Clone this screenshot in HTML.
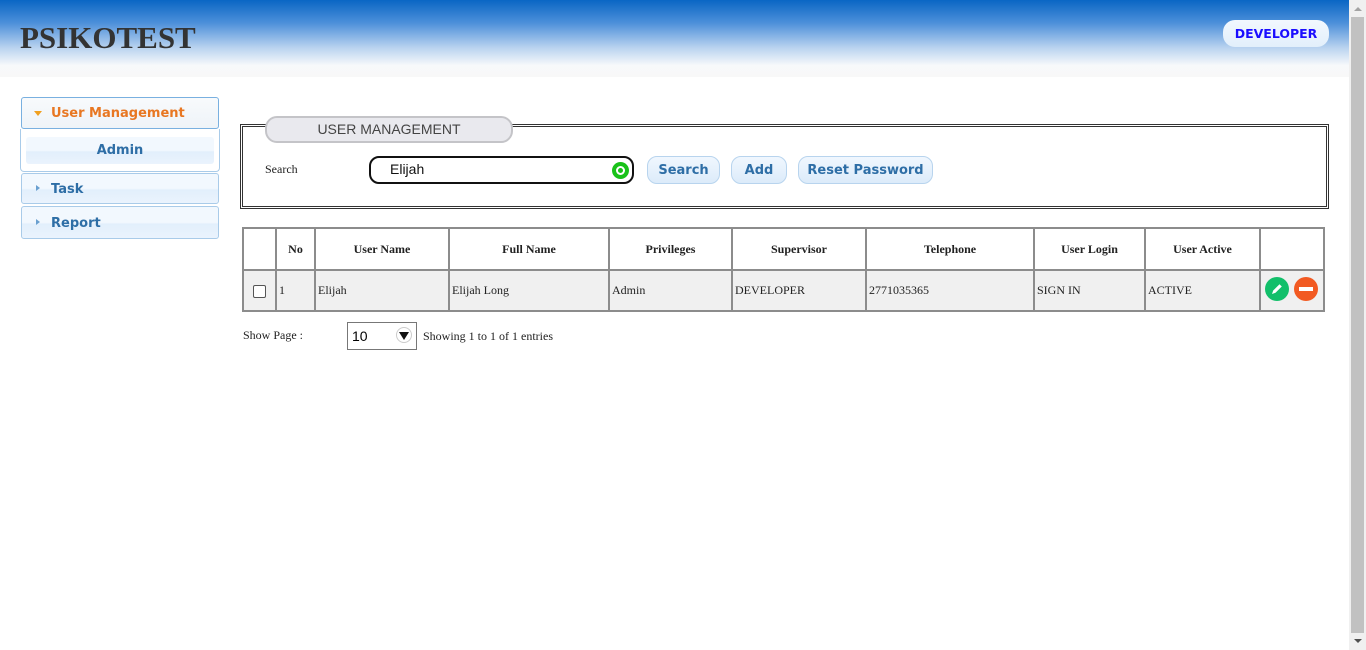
<!DOCTYPE html>
<html><head><style>
*{box-sizing:border-box;margin:0;padding:0}
body{width:1366px;height:650px;overflow:hidden;background:#fff;font-family:"Liberation Serif",serif;position:relative}
.a{position:absolute}
.hdr{left:0;top:0;width:1349px;height:77px;background:linear-gradient(#0a66c4 0%,#4d90da 30%,#b9d3ef 62%,#f7f9fb 85%,#f8f8f8 100%)}
.sb{left:1349px;top:0;width:17px;height:650px;background:#f0f0f0}
.sans{font-family:"Liberation Sans","DejaVu Sans",sans-serif}
.dv{font-family:"DejaVu Sans",sans-serif}
.nav{background:linear-gradient(#f2f8fe 0%,#f2f8fe 50%,#e2effc 55%,#eaf3fd 100%);border:1px solid #a9cbe9;border-radius:3px;color:#2e6ea6;font-weight:bold;font-size:13px}
.btn{background:linear-gradient(#f0f7fe,#dcebfa);border:1px solid #b8d4ee;border-radius:10px;color:#2e6ea6;font-weight:bold;font-size:13px;text-align:center;height:28px;line-height:28px;top:156px}
table{border-collapse:collapse;position:absolute;left:243px;top:228px;width:1083px;font-size:12px;color:#222}
td,th{border:2px solid #8c8c8c;height:42px}
th{font-weight:bold;text-align:center;background:#fff}
td{background:#f0f0f0;padding-left:2px;height:41px}
</style></head><body>
<div class="a hdr"></div>
<div class="a" style="left:20px;top:20px;font-size:31px;font-weight:bold;color:#333">PSIKOTEST</div>
<div class="a dv" style="left:1223px;top:20px;width:106px;height:27px;border-radius:12px;background:linear-gradient(#f2f8fe,#e2effb);color:#1a0dff;font-weight:bold;font-size:12.5px;text-align:center;line-height:25px;padding-top:1px">DEVELOPER</div>
<div class="a sb"><div class="a" style="left:2px;top:17px;width:13px;height:616px;background:#c1c1c1"></div><div class="a" style="left:5px;top:7px;border:4px solid transparent;border-bottom:4px solid #a3a3a3;border-top:0"></div><div class="a" style="left:5px;top:639px;border:4px solid transparent;border-top:4px solid #505050;border-bottom:0"></div></div>

<div class="a nav dv" style="left:21px;top:97px;width:198px;height:32px;background:linear-gradient(#f8fafc,#eef3f8);border-color:#79b0e0;color:#e87722;padding:8px 0 0 29px">User Management</div>
<div class="a" style="left:34px;top:111px;border:4px solid transparent;border-top:5px solid #f0a020;border-bottom:0"></div>
<div class="a" style="left:20px;top:129px;width:200px;height:43px;border:1px solid #a9cbe9;border-top:0;border-radius:0 0 4px 4px"></div>
<div class="a nav dv" style="left:26px;top:137px;width:188px;height:27px;border:0;text-align:center;line-height:28px">Admin</div>
<div class="a nav dv" style="left:21px;top:173px;width:198px;height:31px;padding:8px 0 0 29px">Task</div>
<div class="a" style="left:36px;top:185px;border:3px solid transparent;border-left:4px solid #6aa0d0;border-right:0"></div>
<div class="a nav dv" style="left:21px;top:206px;width:198px;height:33px;padding:9px 0 0 29px">Report</div>
<div class="a" style="left:36px;top:219px;border:3px solid transparent;border-left:4px solid #6aa0d0;border-right:0"></div>

<div class="a" style="left:240px;top:124px;width:1089px;height:85px;border:3px double #333"></div>
<div class="a sans" style="left:265px;top:116px;width:248px;height:27px;border:2px solid #c4c4c8;border-radius:12px;background:#e9e9ee;text-align:center;font-size:14px;color:#444;line-height:22px">USER MANAGEMENT</div>
<div class="a" style="left:265px;top:162px;font-size:12px;color:#222">Search</div>
<div class="a sans" style="left:369px;top:156px;width:265px;height:28px;border:2px solid #111;border-radius:10px;font-size:14px;padding:3px 0 0 19px;color:#111">Elijah</div>
<div class="a" style="left:612px;top:162px;width:17px;height:17px;border-radius:50%;background:#19c219"><div class="a" style="left:4px;top:4px;width:9px;height:9px;border:2px solid #fff;border-radius:50%"></div></div>
<div class="a btn dv" style="left:647px;width:73px">Search</div>
<div class="a btn dv" style="left:731px;width:56px">Add</div>
<div class="a btn dv" style="left:798px;width:135px">Reset Password</div>

<table style="left:242px;top:227px">
<tr><th style="width:33px"></th><th style="width:39px">No</th><th style="width:134px">User Name</th><th style="width:160px">Full Name</th><th style="width:123px">Privileges</th><th style="width:134px">Supervisor</th><th style="width:168px">Telephone</th><th style="width:111px">User Login</th><th style="width:115px">User Active</th><th></th></tr>
<tr><td style="padding:0;text-align:center"><div style="display:inline-block;width:13px;height:13px;border:1px solid #555;border-radius:2px;background:#fff;vertical-align:middle"></div></td><td>1</td><td>Elijah</td><td>Elijah Long</td><td>Admin</td><td>DEVELOPER</td><td>2771035365</td><td>SIGN IN</td><td>ACTIVE</td><td style="position:relative">
<div class="a" style="left:4px;top:6px;width:24px;height:24px;border-radius:50%;background:#12bf6a"><svg width="24" height="24" viewBox="0 0 24 24"><path d="M7 17l1.2-3.5 6.3-6.3 2.3 2.3-6.3 6.3z" fill="#fff"/></svg></div>
<div class="a" style="left:33px;top:6px;width:24px;height:24px;border-radius:50%;background:#f25a22"><div class="a" style="left:5px;top:10px;width:14px;height:4px;background:#fff"></div></div>
</td></tr></table>

<div class="a" style="left:243px;top:328px;font-size:12px;color:#222">Show Page :</div>
<div class="a sans" style="left:347px;top:322px;width:70px;height:28px;border:1px solid #777;font-size:14px;padding:5px 0 0 4px;background:#fff">10</div>
<div class="a" style="left:396px;top:327px;width:16px;height:16px;border-radius:50%;border:1px solid #ccc"><div class="a" style="left:2px;top:4px;border:5px solid transparent;border-top:8px solid #111;border-bottom:0"></div></div>
<div class="a" style="left:423px;top:329px;font-size:12px;color:#222">Showing 1 to 1 of 1 entries</div>
</body></html>
